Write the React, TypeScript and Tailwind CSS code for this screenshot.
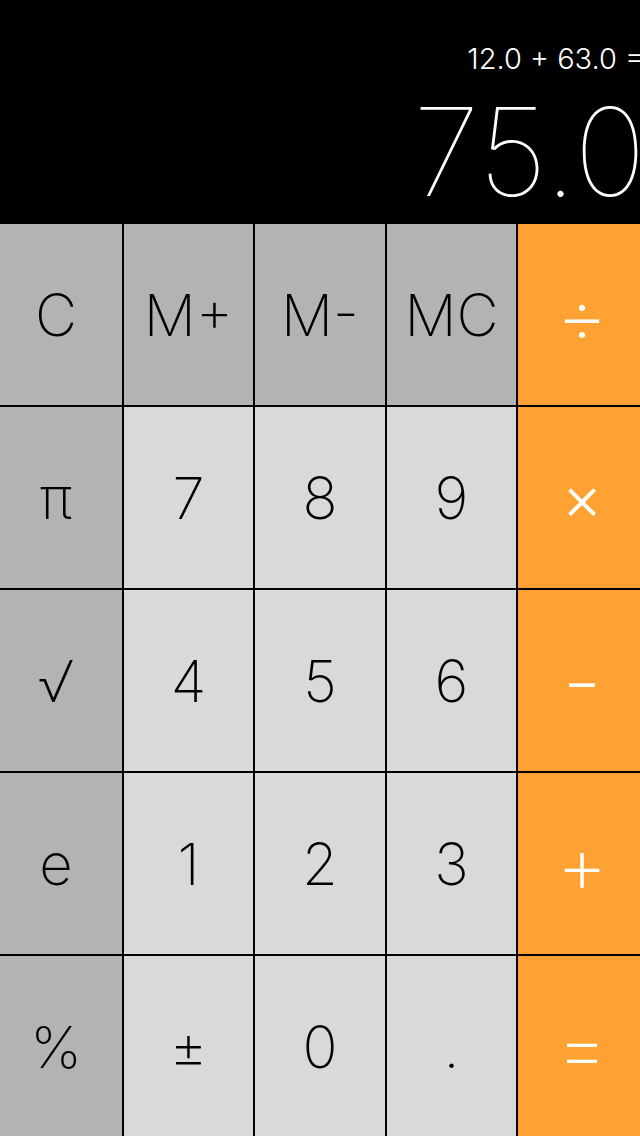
import React from 'react';

type Kind = 'fn' | 'num' | 'op';

interface Key {
  label: string;
  kind: Kind;
  size?: string;
}

const KEYS: Key[] = [
  { label: 'C', kind: 'fn' },
  { label: 'M+', kind: 'fn' },
  { label: 'M-', kind: 'fn' },
  { label: 'MC', kind: 'fn' },
  { label: '÷', kind: 'op', size: 'text-[80px] font-extralight' },
  { label: 'π', kind: 'fn' },
  { label: '7', kind: 'num' },
  { label: '8', kind: 'num' },
  { label: '9', kind: 'num' },
  { label: '×', kind: 'op', size: 'text-[62px] font-light' },
  { label: '√', kind: 'fn' },
  { label: '4', kind: 'num' },
  { label: '5', kind: 'num' },
  { label: '6', kind: 'num' },
  { label: '−', kind: 'op', size: 'text-[58px] font-light' },
  { label: 'e', kind: 'fn' },
  { label: '1', kind: 'num' },
  { label: '2', kind: 'num' },
  { label: '3', kind: 'num' },
  { label: '+', kind: 'op', size: 'text-[80px] font-extralight' },
  { label: '%', kind: 'fn' },
  { label: '±', kind: 'num' },
  { label: '0', kind: 'num' },
  { label: '.', kind: 'num' },
  { label: '=', kind: 'op', size: 'text-[80px] font-extralight' },
];

const kindClass: Record<Kind, string> = {
  fn: 'bg-[#b3b3b3] text-black',
  num: 'bg-[#d9d9d9] text-black',
  op: 'bg-[#ffa233] text-white pl-[6px]',
};

const CalcKey = ({ k, col }: { k: Key; col: number }) => (
  <button
    className={`flex items-center justify-center leading-none ${k.size ?? 'text-[58px] font-extralight'} ${kindClass[k.kind]} ${col === 0 ? 'pr-[10px]' : ''}`}
  >
    {k.label}
  </button>
);

const App: React.FC = () => {
  return (
    <div
      className="w-[640px] h-[1136px] bg-black overflow-hidden flex flex-col"
      style={{ fontFamily: 'Inter, "Open Sans", sans-serif' }}
    >
      {/* Display */}
      <div className="h-[224px] shrink-0 flex flex-col items-end text-white overflow-hidden whitespace-nowrap">
        <div className="mt-[44px] mr-[-4px] text-[29px] font-light leading-none">12.0 + 63.0 =</div>
        <div className="mt-[18px] mr-[-6px] text-[122px] font-thin leading-none">75.0</div>
      </div>

      {/* Keypad */}
      <div className="grid grid-cols-[122px_129px_130px_129px_122px] grid-rows-[181px_181px_181px_181px_181px] gap-[2px] bg-black">
        {KEYS.map((k, i) => (
          <CalcKey key={i} k={k} col={i % 5} />
        ))}
      </div>
    </div>
  );
};

export default App;
